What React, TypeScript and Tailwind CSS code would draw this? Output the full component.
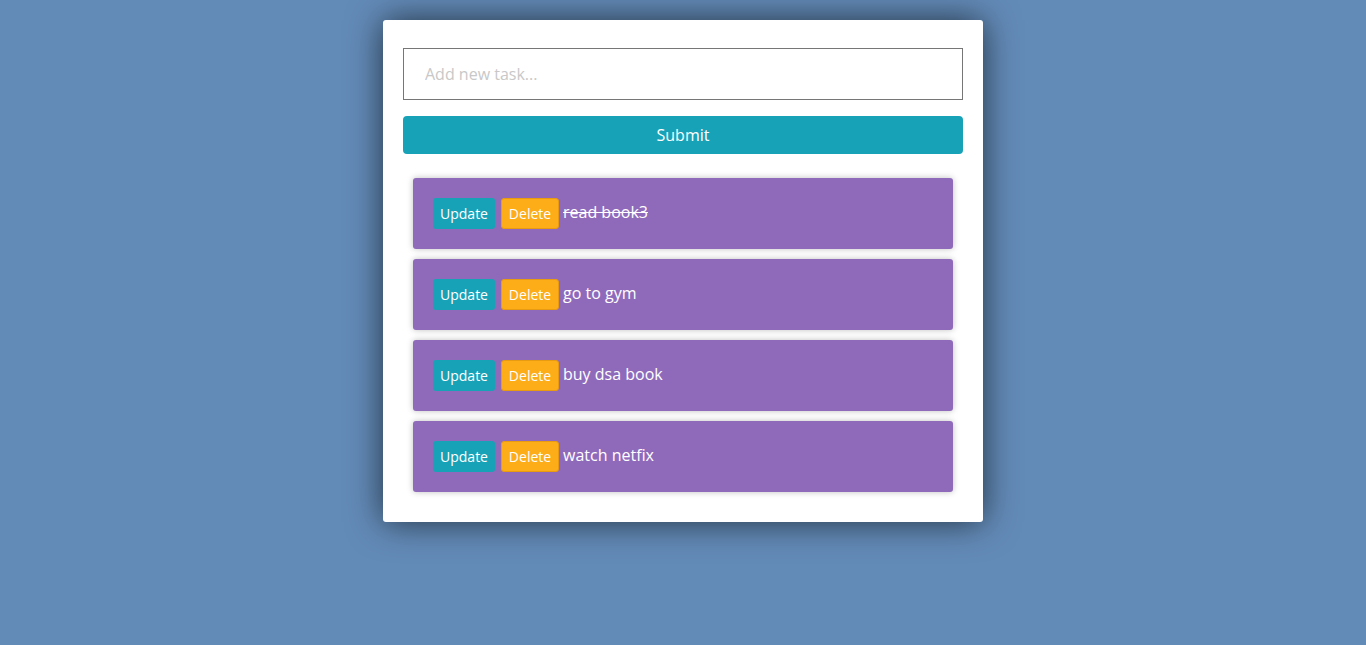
import React, { useState } from 'react';

type Task = { id: number; text: string; done: boolean };

const initialTasks: Task[] = [
  { id: 1, text: 'read book3', done: true },
  { id: 2, text: 'go to gym', done: false },
  { id: 3, text: 'buy dsa book', done: false },
  { id: 4, text: 'watch netfix', done: false },
];

const App: React.FC = () => {
  const [tasks, setTasks] = useState<Task[]>(initialTasks);
  const [value, setValue] = useState('');

  const addTask = (e: React.FormEvent) => {
    e.preventDefault();
    if (!value.trim()) return;
    setTasks(prev => [...prev, { id: Date.now(), text: value, done: false }]);
    setValue('');
  };

  return (
    <div className="min-h-screen bg-[#638bb8] pt-5 font-['Open_Sans','Noto_Sans',sans-serif]">
      <div className="mx-auto w-[600px] rounded-[3px] bg-white px-5 pt-7 pb-[30px] shadow-[0_0_35px_rgba(0,0,0,0.65)]">
        <form onSubmit={addTask} className="flex flex-col gap-4">
          <input
            value={value}
            onChange={e => setValue(e.target.value)}
            placeholder="Add new task..."
            className="h-[52px] w-full border border-[#767676] px-[21px] text-[16px] text-gray-800 outline-none placeholder:text-[#c8c8c8]"
          />
          <button type="submit" className="h-[38px] w-full rounded-[4px] bg-[#17a2b8] text-[16px] text-white">
            Submit
          </button>
        </form>

        <div className="mt-6 flex flex-col gap-[10px] px-[10px]">
          {tasks.map(t => (
            <div
              key={t.id}
              className="flex items-center gap-1 rounded-[3px] bg-[#8f6abb] px-5 py-5 shadow-[0_0_6px_rgba(0,0,0,0.25)]"
            >
              <button className="h-[31px] w-[62px] rounded-[3px] bg-[#17a2b8] text-[14px] text-white">Update</button>
              <button
                onClick={() => setTasks(prev => prev.filter(x => x.id !== t.id))}
                className="ml-[2px] h-[31px] w-[58px] rounded-[3px] border border-[#e89a10] bg-[#fdad18] text-[14px] text-white"
              >
                Delete
              </button>
              <span className={`-mt-[3px] text-[16px] text-white ${t.done ? 'line-through' : ''}`}>{t.text}</span>
            </div>
          ))}
        </div>
      </div>
    </div>
  );
};

export default App;
